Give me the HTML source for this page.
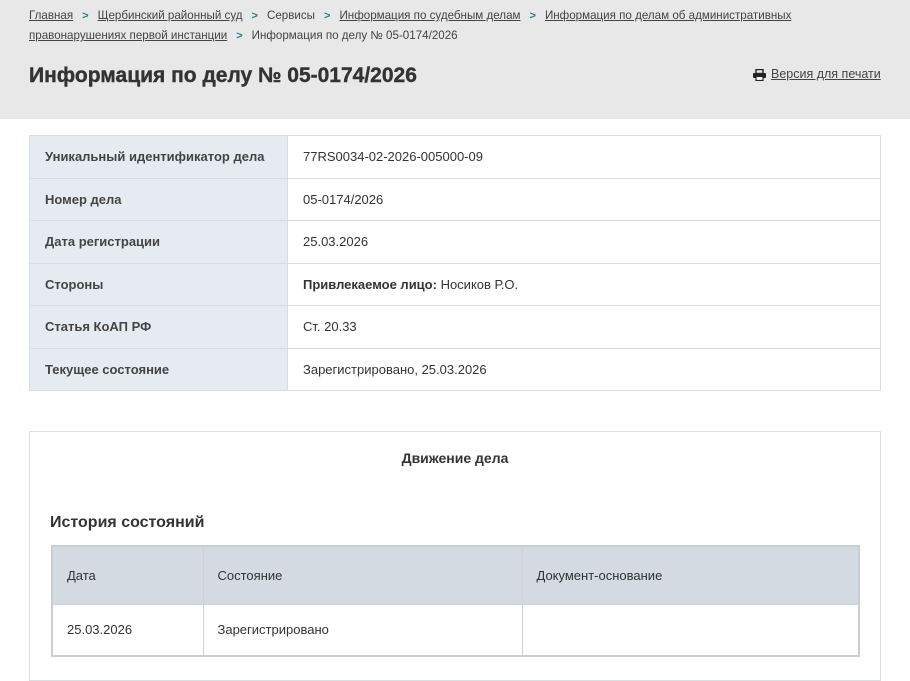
<!DOCTYPE html>
<html><head><meta charset="utf-8"><style>
*{box-sizing:border-box;margin:0;padding:0}
body{width:910px;height:663px;overflow:hidden;background:#fff;font-family:"Liberation Sans","DejaVu Sans",sans-serif;color:#333}
.hdr{position:absolute;left:0;top:0;width:910px;height:119px;background:#e8e8e8}
.bc{position:absolute;left:29px;top:6px;width:800px;font-size:11.6px;line-height:19px;color:#444}
.bc a{color:#444;text-decoration:underline}
.bc .s{color:#2a7a8c;font-weight:bold;margin:0 9px;font-size:11px}
h1{position:absolute;left:29px;top:64px;font-size:21px;font-weight:bold;color:#333;letter-spacing:0;-webkit-text-stroke:0.4px #333}
.pr{position:absolute;top:67px;font-size:12px;color:#444;text-decoration:underline}
.info{position:absolute;left:29px;top:135px;width:852px;border-collapse:collapse;font-size:13px}
.info td{border:1px solid #d9dde1;height:42.5px;padding:0 15px;vertical-align:middle}
.info td.l{background:#e6ebf1;width:258px;font-weight:bold;color:#444}
.mv{position:absolute;left:29px;top:431px;width:852px;height:250px;border:1px solid #dcdfe2}
.mv .t{position:absolute;left:0;width:100%;top:18px;text-align:center;font-size:14px;font-weight:bold}
.mv .h{position:absolute;left:20px;top:82px;font-size:16px;font-weight:bold;color:#333}
.ht{position:absolute;left:21px;top:113px;width:809px;border-collapse:collapse;border:2px solid #c8ced4;font-size:13px}
.ht td{border:1px solid #cdd2d6;padding:0 14px;vertical-align:middle}
.ht tr.hd td{background:#d3dae1;height:58px}
.ht tr.r td{height:52px}
</style></head><body>
<div class="hdr">
<div class="bc"><a>Главная</a><span class="s">&gt;</span><a>Щербинский районный суд</a><span class="s">&gt;</span>Сервисы<span class="s">&gt;</span><a>Информация по судебным делам</a><span class="s">&gt;</span><a>Информация по делам об административных правонарушениях первой инстанции</a><span class="s">&gt;</span>Информация по делу № 05-0174/2026</div>
<h1>Информация по делу № 05-0174/2026</h1>
<svg style="position:absolute;left:753px;top:69px" width="13" height="12" viewBox="0 0 13 12"><rect x="3" y="0.5" width="7" height="4" fill="none" stroke="#222" stroke-width="1.4"/><rect x="0" y="4" width="13" height="5" rx="1" fill="#222"/><rect x="3" y="7.5" width="7" height="4" fill="#fff" stroke="#222" stroke-width="1.2"/></svg>
<span class="pr" style="left:771px;font-size:12.5px">Версия для печати</span>
</div>
<table class="info">
<tr><td class="l">Уникальный идентификатор дела</td><td>77RS0034-02-2026-005000-09</td></tr>
<tr><td class="l">Номер дела</td><td>05-0174/2026</td></tr>
<tr><td class="l">Дата регистрации</td><td>25.03.2026</td></tr>
<tr><td class="l">Стороны</td><td><b>Привлекаемое лицо:</b> Носиков Р.О.</td></tr>
<tr><td class="l">Статья КоАП РФ</td><td>Ст. 20.33</td></tr>
<tr><td class="l">Текущее состояние</td><td>Зарегистрировано, 25.03.2026</td></tr>
</table>
<div class="mv">
<div class="t">Движение дела</div>
<div class="h">История состояний</div>
<table class="ht">
<tr class="hd"><td style="width:151px">Дата</td><td style="width:319px">Состояние</td><td>Документ-основание</td></tr>
<tr class="r"><td>25.03.2026</td><td>Зарегистрировано</td><td></td></tr>
</table>
</div>
</body></html>
